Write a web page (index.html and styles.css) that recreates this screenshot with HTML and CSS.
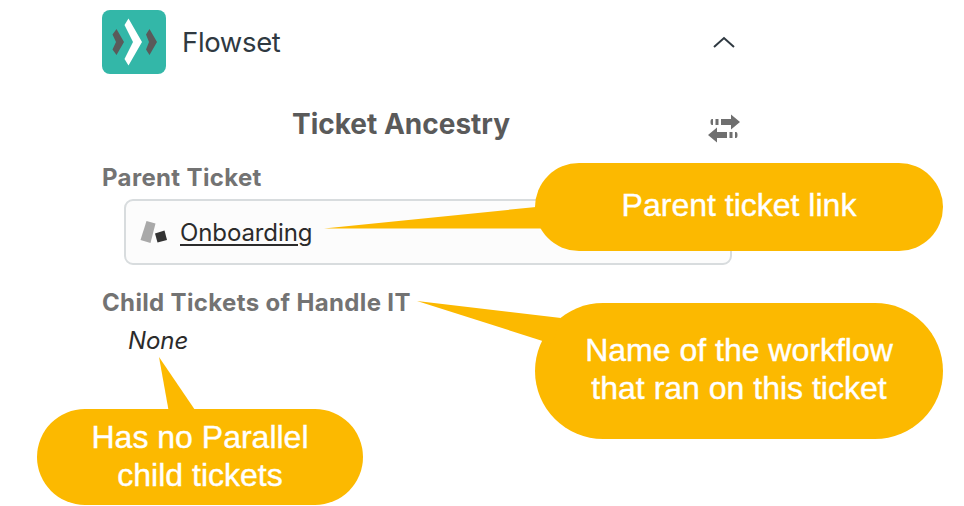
FILE: index.html
```html
<!DOCTYPE html>
<html lang="en">
<head>
    <meta charset="UTF-8" />
    <meta name="viewport" content="width=device-width, initial-scale=1.0"/>
    <title>Flowset</title>
    <link rel="stylesheet" href="styles.css">
</head>
<body>
    <main class="panel">
        <header class="app-bar">
            <svg class="logo" viewBox="0 0 64 64">
                <rect width="64" height="64" rx="8" fill="#33b7a8"/>
                <path d="M10.500 24.500 14.5 19 22 32 14.5 45 10.500 39.500 14 32Z" fill="#5a5a5a"/>
                <path d="M22.500 15 26.5 8.500 40 32 26.500 55.500 22.500 49 31 32Z" fill="#fff"/>
                <path d="M44 24.500 47.500 19 55 32 47.500 45 44 39.500 47 32Z" fill="#5a5a5a"/>
            </svg>
            <span class="app-name">Flowset</span>
            <svg class="chevron" viewBox="0 0 24 14">
                <path d="M2 12 12 3 22 12" fill="none" stroke="#2f3941" stroke-width="2"/>
            </svg>
        </header>

        <div class="title-row">
            <h1>Ticket Ancestry</h1>
            <svg class="swap" viewBox="0 0 34 30">
                <g fill="#6f6f6f">
                    <path d="M6 5v6H5Q3.500 11 3.500 8T5 5ZM8.500 5h3v6h-3ZM14 5h10V.5L33 8 24 15.500V11H14Z"/>
                    <path d="M28 18v6h1q1.500 0 1.500-3T29 18ZM22.500 18h3v6h-3ZM20 18H10v-4.500L1 21l9 7.500V24h10Z"/>
                </g>
            </svg>
        </div>

        <h2>Parent Ticket</h2>
        <div class="ticket-card">
            <svg class="ticket-icon" viewBox="0 0 28 22">
                <path d="M6.500 0 15.500 2.500 10.500 22 .5 19Z" fill="#a9a9a9"/>
                <path d="M15 12.500 24.500 9.500 27 19 17.500 21.500Z" fill="#333"/>
            </svg>
            <a class="ticket-link" href="#">Onboarding</a>
        </div>

        <h2 class="child-heading">Child Tickets of Handle IT</h2>
        <p class="none">None</p>
    </main>

    <!-- Callouts over the panel -->
    <div class="callout callout-parent">
        <svg class="tail" viewBox="0 0 230 26"><path d="M0 21.500 212 0H230V21.500Z"/></svg>
        <span>Parent ticket link</span>
    </div>
    <div class="callout callout-workflow">
        <svg class="tail" viewBox="0 0 150 45"><path d="M0 0 144 17 135 43Z"/></svg>
        <span>Name of the workflow<br>that ran on this ticket</span>
    </div>
    <div class="callout callout-child">
        <svg class="tail" viewBox="0 0 40 56"><path d="M0 0 36 53H9.500Z"/></svg>
        <span>Has no Parallel<br>child tickets</span>
    </div>
</body>
</html>
```

FILE: styles.css
```css
:root {
    --callout: #fcb900;
    --border: #d8dcde;
    --heading: #5a5a5a;
    --label: #737373;
}

* {
    box-sizing: border-box;
}

body {
    font-family: Inter, sans-serif;
    margin: 0;
    height: 506px;
    background-color: #ffffff;
    position: relative;
    overflow: hidden;
}

.panel {
    width: 742px;
    padding: 10px 0 0 102px;
}

.app-bar {
    display: flex;
    align-items: center;
    height: 64px;
}

.logo {
    width: 64px;
    height: 64px;
}

.app-name {
    flex: 1;
    margin-left: 16px;
    font-size: 27.5px;
    letter-spacing: -0.35px;
    color: #2f3941;
}

.chevron {
    width: 24px;
    height: 14px;
    margin-right: 6px;
}

.title-row {
    display: flex;
    align-items: center;
    height: 40px;
    margin-top: 30px;
}

h1 {
    flex: 1;
    margin: 0 0 0 190px;
    font-size: 28px;
    line-height: 40px;
    color: var(--heading);
}

.swap {
    width: 34px;
    height: 30px;
    margin: 9px 1px 0 0;
}

h2 {
    margin: 18px 0 0;
    font-size: 24px;
    line-height: 32px;
    letter-spacing: 0.35px;
    color: var(--label);
}

.ticket-card {
    display: flex;
    align-items: center;
    width: 608px;
    height: 66px;
    margin: 5px 0 0 22px;
    padding-left: 14px;
    border: 2px solid var(--border);
    border-radius: 9px;
    background: #fcfcfc;
}

.ticket-icon {
    width: 28px;
    height: 22px;
}

.ticket-link {
    margin-left: 12px;
    font-size: 24px;
    letter-spacing: -0.1px;
    color: #2b2b2b;
    text-underline-offset: 3px;
    text-decoration-thickness: 2px;
}

.child-heading {
    margin-top: 22px;
}

.none {
    margin: 6px 0 0 26px;
    font-size: 24px;
    line-height: 32px;
    letter-spacing: -0.1px;
    font-style: italic;
    color: #2b2b2b;
}

/* Callouts */
.callout {
    position: absolute;
    display: flex;
    align-items: center;
    justify-content: center;
    background: var(--callout);
    color: #fff;
    font-family: "Liberation Sans", Arial, sans-serif;
    font-size: 32px;
    line-height: 38px;
    text-align: center;
    white-space: nowrap;
    -webkit-text-stroke: 0.4px #fff;
}

.callout span {
    position: relative;
}

.tail {
    position: absolute;
    fill: var(--callout);
}

.callout-parent {
    left: 535px;
    top: 163px;
    width: 408px;
    height: 88px;
    padding-bottom: 4px;
    border-radius: 44px;
}

.callout-parent .tail {
    left: -211px;
    top: 44px;
    width: 230px;
    height: 26px;
}

.callout-workflow {
    left: 535px;
    top: 303px;
    width: 408px;
    height: 136px;
    padding-bottom: 4px;
    border-radius: 68px;
}

.callout-workflow .tail {
    left: -118px;
    top: -2px;
    width: 150px;
    height: 45px;
}

.callout-child {
    left: 37px;
    top: 409px;
    width: 326px;
    height: 96px;
    padding-bottom: 2px;
    border-radius: 48px;
}

.callout-child .tail {
    left: 122px;
    top: -52px;
    width: 40px;
    height: 56px;
}
```
